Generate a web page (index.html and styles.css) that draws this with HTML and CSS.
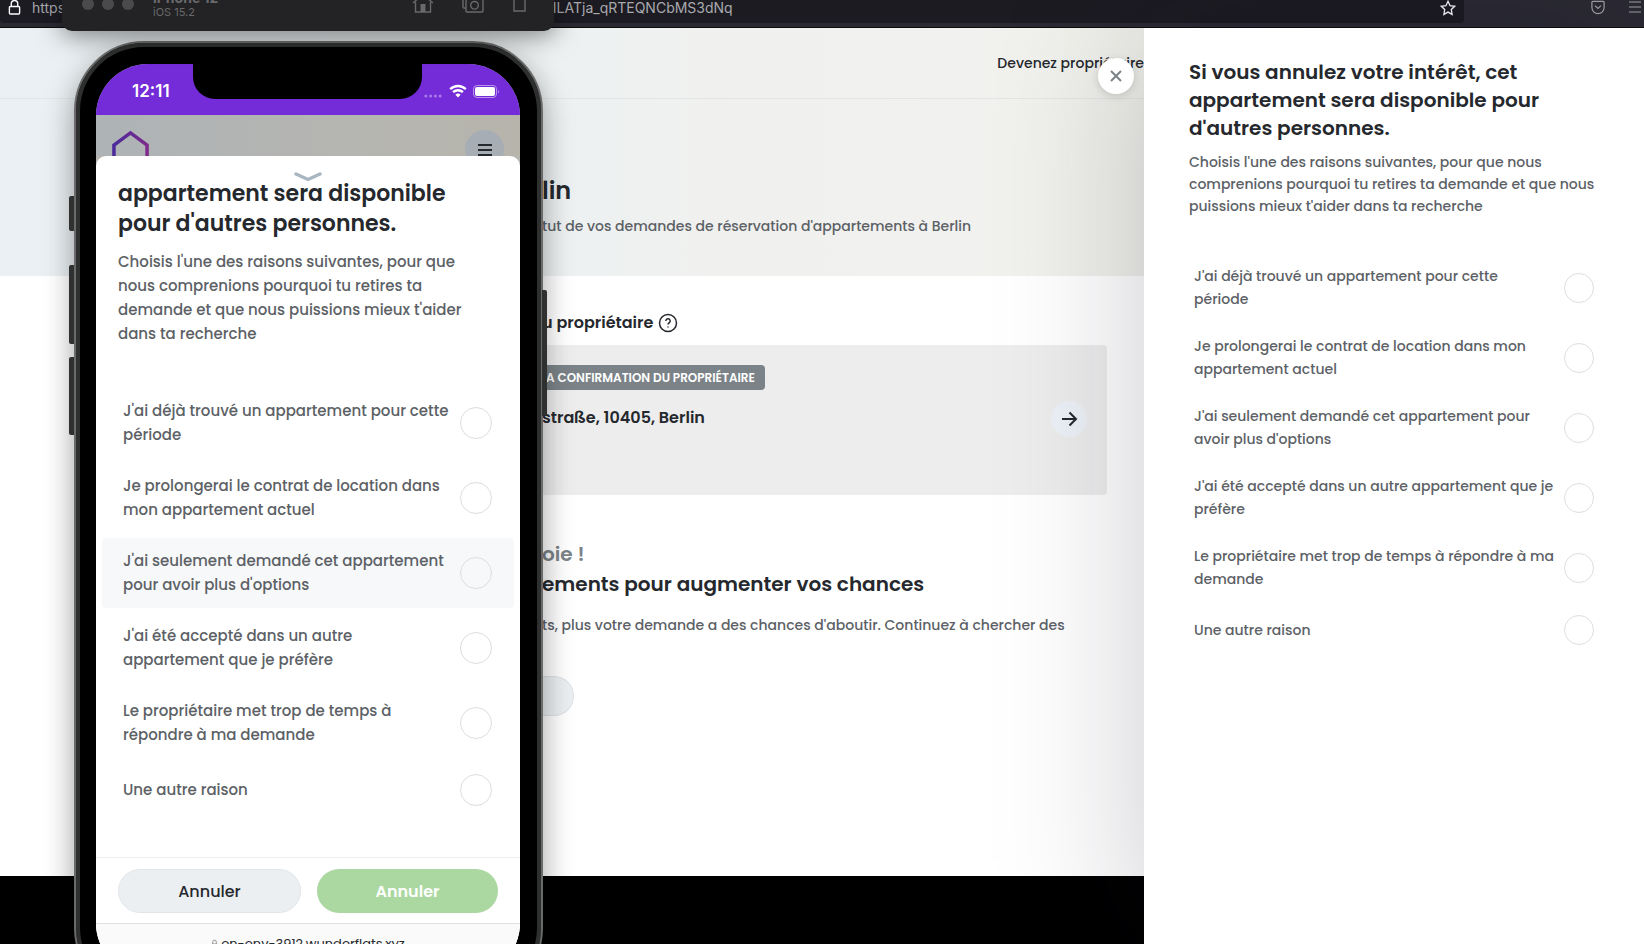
FILE: index.html
```html
<!DOCTYPE html>
<html lang="fr">
<head>
  <meta charset="UTF-8" />
  <title>Wunderflats</title>
  <link rel="stylesheet" href="styles.css">
</head>
<body>
  <div class="browser-bar">
    <div class="address">
      <svg class="lock" viewBox="0 0 14 18"><path d="M3.5 8V5a3.5 3.5 0 0 1 7 0v3M2.500 8h9a1 1 0 0 1 1 1v6a1 1 0 0 1-1 1h-9a1 1 0 0 1-1-1V9a1 1 0 0 1 1-1z"/></svg>
      <input class="url" type="text" aria-label="Adresse" value="https://en-env-3912.wunderflats.xyz/fr/my/requests/berlin/aB3kfLq81Zx74bdciILATja_qRTEQNCbMS3dNq">
      <svg class="star" viewBox="0 0 18 18"><path d="M9 1.500l2.300 4.900 5.200.7-3.800 3.700.9 5.400L9 13.600l-4.600 2.600.9-5.400L1.500 7.100l5.200-.7z"/></svg>
    </div>
    <div class="bar-icons">
      <svg class="pocket" viewBox="0 0 16 16"><path d="M2.500 1.500h11a1 1 0 0 1 1 1V8a6.500 6.500 0 0 1-13 0V2.500a1 1 0 0 1 1-1zM4.800 6L8 9l3.200-3"/></svg>
      <svg class="burger" viewBox="0 0 14 14"><path d="M1 2h12M1 7h12M1 12h12"/></svg>
    </div>
  </div>

  <div class="page">
    <main class="content">
      <div class="banner">
        <header class="top-nav"><a href="#">Devenez propriétaire</a></header>
        <div class="hero">
          <h1>lin</h1>
          <p>tut de vos demandes de réservation d'appartements à Berlin</p>
        </div>
      </div>

      <section class="requests">
        <h2 class="group-title">u propriétaire
          <svg viewBox="0 0 20 20"><circle cx="10" cy="10" r="8.500"/><path d="M7.800 8a2.200 2.200 0 1 1 3.200 2c-.7.400-1 .8-1 1.500M10 13.600v.9"/></svg>
        </h2>
        <div class="card">
          <div>
            <span class="badge">A CONFIRMATION DU PROPRIÉTAIRE</span>
            <p class="street">straße, 10405, Berlin</p>
          </div>
          <button class="arrow" aria-label="Voir la demande">
            <svg viewBox="0 0 20 20"><path d="M3 10h14M10.500 3.500L17 10l-6.500 6.500"/></svg>
          </button>
        </div>

        <p class="hint">oie !</p>
        <h2 class="boost">ements pour augmenter vos chances</h2>
        <p class="more">ts, plus votre demande a des chances d'aboutir. Continuez à chercher des</p>
        <button class="pill" aria-label="Chercher"></button>
      </section>

      <footer class="site-footer"></footer>
    </main>

    <aside class="panel">
      <button class="close" aria-label="Fermer">
        <svg viewBox="0 0 14 14"><path d="M2 2l10 10M12 2L2 12"/></svg>
      </button>
      <h2>Si vous annulez votre intérêt, cet<br>appartement sera disponible pour<br>d'autres personnes.</h2>
      <p>Choisis l'une des raisons suivantes, pour que nous<br>comprenions pourquoi tu retires ta demande et que nous<br>puissions mieux t'aider dans ta recherche</p>
      <form class="options">
        <label class="option"><span>J'ai déjà trouvé un appartement pour cette<br>période</span><input type="radio" name="raison"></label>
        <label class="option"><span>Je prolongerai le contrat de location dans mon<br>appartement actuel</span><input type="radio" name="raison"></label>
        <label class="option"><span>J'ai seulement demandé cet appartement pour<br>avoir plus d'options</span><input type="radio" name="raison"></label>
        <label class="option"><span>J'ai été accepté dans un autre appartement que je<br>préfère</span><input type="radio" name="raison"></label>
        <label class="option"><span>Le propriétaire met trop de temps à répondre à ma<br>demande</span><input type="radio" name="raison"></label>
        <label class="option"><span>Une autre raison</span><input type="radio" name="raison"></label>
      </form>
    </aside>
  </div>

  <!-- iOS simulator -->
  <div class="phone">
    <i class="key key-mute"></i>
    <i class="key key-up"></i>
    <i class="key key-down"></i>
    <i class="key key-power"></i>
    <div class="screen">
      <div class="status">
        <span class="time">12:11</span>
        <div class="notch"></div>
        <div class="signals">
          <svg class="dots" viewBox="0 0 20 4"><circle cx="2" cy="2" r="1.600"/><circle cx="7" cy="2" r="1.600"/><circle cx="12" cy="2" r="1.600"/><circle cx="17" cy="2" r="1.600"/></svg>
          <svg class="wifi" viewBox="0 0 18 14"><path d="M1.200 5.200a11.200 11.200 0 0 1 15.600 0M4.100 8.200a7 7 0 0 1 9.800 0"/><path class="wifi-dot" d="M9 13.500L6.400 10.800a3.700 3.700 0 0 1 5.200 0z"/></svg>
          <svg class="battery" viewBox="0 0 27 13"><rect class="shell" x=".5" y=".5" width="23" height="12" rx="3.500"/><rect x="2" y="2" width="20" height="9" rx="2"/><path class="tip" d="M25 4.500q1.800 2 0 4z"/></svg>
        </div>
      </div>
      <div class="app-bar">
        <svg class="logo" viewBox="0 0 38 40"><defs><linearGradient id="lg"><stop offset="0" stop-color="#4b2a9c"/><stop offset="1" stop-color="#7d2a8c"/></linearGradient></defs><path d="M2 40V15L19 2.500 36 15v25"/></svg>
        <button class="menu" aria-label="Menu"><svg viewBox="0 0 16 14"><path d="M1 2h14M1 7h14M1 12h14"/></svg></button>
      </div>
      <div class="sheet">
        <svg class="grip" viewBox="0 0 28 10"><path d="M2 2l12 5.500L26 2"/></svg>
        <div class="sheet-body">
          <h2>appartement sera disponible<br>pour d'autres personnes.</h2>
          <p>Choisis l'une des raisons suivantes, pour que<br>nous comprenions pourquoi tu retires ta<br>demande et que nous puissions mieux t'aider<br>dans ta recherche</p>
          <form class="options">
            <label class="option"><span>J'ai déjà trouvé un appartement pour cette<br>période</span><input type="radio" name="motif"></label>
            <label class="option"><span>Je prolongerai le contrat de location dans<br>mon appartement actuel</span><input type="radio" name="motif"></label>
            <label class="option active"><span>J'ai seulement demandé cet appartement<br>pour avoir plus d'options</span><input type="radio" name="motif"></label>
            <label class="option"><span>J'ai été accepté dans un autre<br>appartement que je préfère</span><input type="radio" name="motif"></label>
            <label class="option"><span>Le propriétaire met trop de temps à<br>répondre à ma demande</span><input type="radio" name="motif"></label>
            <label class="option"><span>Une autre raison</span><input type="radio" name="motif"></label>
          </form>
        </div>
        <div class="actions">
          <button class="cancel">Annuler</button>
          <button class="confirm">Annuler</button>
        </div>
        <div class="safari"><svg viewBox="0 0 8 12"><path d="M2 6V3.500a2 2 0 0 1 4 0V6M1 6h6v5H1z"/></svg>en-env-3912.wunderflats.xyz</div>
      </div>
    </div>
  </div>

  <div class="sim-bar">
    <div class="lights"><i></i><i></i><i></i></div>
    <div class="device"><b>iPhone 12</b><span>iOS 15.2</span></div>
    <div class="sim-icons">
      <svg viewBox="0 0 22 20"><path d="M1 10L11 1.500 21 10M3.500 9v10h15V9M15.500 5V2h2v5"/><path class="solid" d="M8.500 11h5v8h-5z"/></svg>
      <svg viewBox="0 0 22 20"><path d="M4 15H2a1 1 0 0 1-1-1V5a1 1 0 0 1 1-1h2M5 6h3.500l1.500-2h5l1.500 2H20a1 1 0 0 1 1 1v11a1 1 0 0 1-1 1H5a1 1 0 0 1-1-1V7a1 1 0 0 1 1-1z"/><circle cx="12.500" cy="12.300" r="3.800"/></svg>
      <svg viewBox="0 0 22 20"><path d="M2 0v18h11V0M10 2l3-3"/></svg>
    </div>
  </div>
</body>
</html>
```

FILE: styles.css
```css
* {
  box-sizing: border-box;
}

html {
  overflow: hidden;
}

body {
  display: flex;
  flex-direction: column;
  position: relative;
  height: 100vh;
  margin: 0;
  overflow: hidden;
  font-family: Poppins, Inter, "Open Sans", sans-serif;
  color: #25282d;
  background: #fff;
}

h1, h2, p {
  margin: 0;
  font-weight: 600;
  white-space: nowrap;
}

p {
  font-weight: 500;
  color: #5c6166;
}

svg {
  display: block;
  flex: none;
  fill: none;
  stroke: currentColor;
  stroke-width: 2;
}

button {
  padding: 0;
  border: none;
  font-family: inherit;
  cursor: pointer;
}

/* browser toolbar */
.browser-bar {
  display: flex;
  flex: none;
  height: 28px;
  background: #2b2a33;
  border-bottom: 1px solid #0c0c0d;
  color: #fbfbfe;
}

.address {
  display: flex;
  flex: 1;
  height: 23px;
  padding: 0 8px 7px;
  align-items: flex-end;
  background: #1c1b22;
  border-radius: 0 0 4px 4px;
}

.lock {
  width: 13px;
  height: 17px;
  stroke-width: 1.5;
}

.url {
  flex: 1;
  height: 17px;
  margin-left: 11px;
  padding: 0;
  border: none;
  outline: none;
  background: none;
  font-family: Inter, sans-serif;
  font-size: 14px;
  color: #a9a9ae;
}

.star {
  width: 16px;
  height: 16px;
  stroke-width: 1.5;
}

.bar-icons {
  display: flex;
  flex: 0 0 180px;
  justify-content: flex-end;
  gap: 22px;
  padding-right: 2px;
  color: #a5a4ac;
}

.pocket {
  width: 16px;
  height: 15px;
  stroke-width: 1.3;
}

.burger {
  width: 14px;
  height: 14px;
  stroke-width: 1.2;
}

/* page */
.page {
  display: flex;
  flex: 1;
  min-height: 0;
}

.content {
  display: flex;
  flex: 1;
  flex-direction: column;
  min-width: 0;
  overflow: hidden;
}

.banner {
  background: linear-gradient(90deg, #eaf0f3 0%, #edf1f2 48%, #f0f1ef 62%, #f1f1ef 85%, #f0f0ea 100%);
}

.top-nav {
  display: flex;
  height: 71px;
  align-items: center;
  justify-content: flex-end;
  border-bottom: 1px solid #e3e6e7;
}

.top-nav a {
  color: #25282d;
  font-size: 14px;
  font-weight: 500;
  text-decoration: none;
  white-space: nowrap;
}

.hero {
  height: 177px;
  padding: 74px 0 0 542px;
}

.hero h1 {
  font-size: 24px;
  line-height: 36px;
}

.hero p {
  margin-top: 7px;
  font-size: 14px;
  line-height: 21px;
}

.requests {
  flex: 1;
  padding: 35px 37px 0 542px;
}

.group-title {
  display: flex;
  align-items: center;
  gap: 5px;
  font-size: 16px;
  line-height: 24px;
}

.group-title svg {
  width: 20px;
  height: 20px;
  stroke-width: 1.5;
}

.card {
  display: flex;
  height: 150px;
  margin-top: 10px;
  padding: 20px 20px 0 0;
  justify-content: space-between;
  background: #ededed;
  border-radius: 0 4px 4px 0;
}

.badge {
  display: block;
  padding: 0 10px 0 4px;
  border-radius: 0 4px 4px 0;
  background: #7b8388;
  color: #fff;
  font-size: 12px;
  font-weight: 600;
  line-height: 25px;
}

.street {
  margin-top: 16px;
  font-size: 16px;
  font-weight: 600;
  line-height: 24px;
  color: #25282d;
}

.arrow {
  display: flex;
  width: 36px;
  height: 36px;
  margin-top: 36px;
  align-items: center;
  justify-content: center;
  border-radius: 50%;
  background: #edf1f7;
  color: #25282d;
}

.arrow svg {
  width: 20px;
  height: 20px;
}

.hint {
  margin-top: 44px;
  font-size: 20px;
  font-weight: 600;
  line-height: 30px;
  color: #7b8388;
}

.boost {
  font-size: 20px;
  line-height: 30px;
}

.more {
  margin-top: 16px;
  font-size: 14px;
  line-height: 21px;
}

.pill {
  width: 32px;
  height: 40px;
  margin-top: 40px;
  border: 1px solid #dde2e6;
  border-left: none;
  border-radius: 0 20px 20px 0;
  background: #eceff2;
}

.site-footer {
  flex: none;
  height: 68px;
  background: #000;
}

/* side panel */
.panel {
  position: relative;
  flex: 0 0 500px;
  padding: 30px 30px 0 45px;
  background: #fff;
  box-shadow: 0 0 140px rgba(20, 20, 40, 0.22);
}

.panel h2 {
  font-size: 20px;
  line-height: 28px;
}

.panel p {
  margin-top: 9px;
  font-size: 14px;
  line-height: 22px;
}

.panel .options {
  margin: 38px 0 0 -15px;
  gap: 4px;
  font-size: 14px;
  line-height: 23px;
}

.panel .option {
  padding: 10px 20px;
}

.panel .option input {
  width: 30px;
  height: 30px;
}

.close {
  display: flex;
  position: absolute;
  top: 30px;
  left: -46px;
  width: 36px;
  height: 36px;
  align-items: center;
  justify-content: center;
  border-radius: 50%;
  background: #fff;
  color: #7b8388;
  box-shadow: 0 2px 8px rgba(0, 0, 0, 0.15);
}

.close svg {
  width: 14px;
  height: 14px;
}

.options {
  display: flex;
  flex-direction: column;
}

.option {
  display: flex;
  align-items: center;
  justify-content: space-between;
  border-radius: 4px;
  color: #5c6166;
  font-weight: 500;
  white-space: nowrap;
}

.option input {
  appearance: none;
  flex: none;
  margin: 0;
  border: 1px solid #dedede;
  border-radius: 50%;
}

/* phone */
.phone {
  position: absolute;
  top: 41px;
  bottom: -54px;
  left: 74px;
  width: 469px;
  padding: 21px 21px 21px 20px;
  border: 2px solid #6a6a6a;
  border-radius: 70px;
  background: #000;
  box-shadow: inset 0 0 0 4px #2e302f, 0 10px 30px rgba(0, 0, 0, 0.38);
}

.key {
  position: absolute;
  left: -7px;
  width: 5px;
  border-radius: 2px 0 0 2px;
  background: #2f3130;
}

.key-mute {
  top: 153px;
  height: 35px;
}

.key-up {
  top: 222px;
  height: 79px;
}

.key-down {
  top: 314px;
  height: 78px;
}

.key-power {
  top: 247px;
  left: auto;
  right: -6px;
  height: 126px;
  border-radius: 0 2px 2px 0;
}

.screen {
  display: flex;
  flex-direction: column;
  height: 100%;
  overflow: hidden;
  border-radius: 52px;
  background: #b6b5b0;
}

.status {
  display: flex;
  flex: none;
  height: 51px;
  justify-content: space-between;
  background: #742cd8;
  color: #fff;
}

.time {
  width: 97px;
  padding: 17px 0 0 36px;
  font-family: Inter, sans-serif;
  font-size: 17px;
  font-weight: 600;
  line-height: 20px;
}

.notch {
  width: 229px;
  height: 35px;
  border-radius: 0 0 22px 22px;
  background: #000;
}

.signals {
  display: flex;
  width: 98px;
  height: 54px;
  padding-right: 20px;
  align-items: center;
  justify-content: flex-end;
  gap: 6px;
}

.dots {
  width: 19px;
  height: 4px;
  margin-top: 9px;
  fill: #a878ea;
  stroke: none;
}

.wifi {
  width: 18px;
  height: 14px;
  stroke-width: 2.4;
}

.wifi-dot {
  fill: #fff;
  stroke: none;
}

.battery {
  width: 27px;
  height: 13px;
  fill: #fff;
  stroke: none;
}

.battery .shell {
  fill: none;
  stroke: #b894ec;
  stroke-width: 1;
}

.battery .tip {
  fill: #b894ec;
}

.app-bar {
  display: flex;
  flex: none;
  height: 41px;
  padding: 15px 16px 0;
  justify-content: space-between;
  background: linear-gradient(90deg, #aeb3b6, #b5b5b1 60%, #b6b4ab);
}

.logo {
  width: 37px;
  height: 40px;
  stroke: url(#lg);
  stroke-width: 3.6;
}

.menu {
  display: flex;
  width: 39px;
  height: 39px;
  align-items: center;
  justify-content: center;
  border-radius: 50%;
  background: #a6adb4;
  color: #25282d;
}

.menu svg {
  width: 16px;
  height: 14px;
}

.sheet {
  display: flex;
  position: relative;
  flex: 1;
  flex-direction: column;
  border-radius: 10px 10px 0 0;
  background: #fff;
}

.grip {
  position: absolute;
  top: 16px;
  left: 198px;
  width: 28px;
  height: 10px;
  color: #a9b6bf;
  stroke-width: 3.4;
  stroke-linecap: round;
}

.sheet-body {
  height: 701px;
  padding: 23px 6px 0;
}

.sheet-body h2,
.sheet-body p {
  padding-left: 16px;
}

.sheet-body h2 {
  font-size: 22px;
  line-height: 30px;
}

.sheet-body p {
  margin-top: 11px;
  font-size: 15px;
  line-height: 24px;
}

.sheet-body .options {
  margin-top: 42px;
  gap: 5px;
  font-size: 15px;
  line-height: 24px;
}

.sheet-body .option {
  padding: 11px 22px 11px 21px;
}

.sheet-body .option input {
  width: 32px;
  height: 32px;
}

.option.active {
  background: #f7f8fa;
}

.actions {
  display: flex;
  gap: 16px;
  padding: 11px 22px 10px;
  border-top: 1px solid #eceeef;
  border-bottom: 1px solid #dfe1e3;
}

.actions button {
  flex: 1;
  height: 44px;
  border-radius: 22px;
  font-size: 16px;
}

.cancel {
  border: 1px solid #e2e5e8;
  background: #eceff2;
  color: #25282d;
  font-weight: 500;
}

.confirm {
  background: #abd8a0;
  color: #fff;
  font-weight: 600;
}

.safari {
  display: flex;
  flex: 1;
  padding-top: 11px;
  align-items: flex-start;
  justify-content: center;
  gap: 3px;
  background: #fafafa;
  font-size: 13px;
  line-height: 18px;
}

.safari svg {
  width: 7px;
  height: 12px;
  margin-top: 3px;
  color: #888;
  stroke-width: 1;
}

/* simulator title bar */
.sim-bar {
  display: flex;
  position: absolute;
  top: 0;
  left: 62px;
  width: 492px;
  height: 31px;
  padding: 0 20px;
  border-radius: 0 0 10px 10px;
  background: #232325;
  color: #69696b;
  box-shadow: 0 4px 26px rgba(0, 0, 0, 0.5);
}

.lights {
  display: flex;
  gap: 8px;
}

.lights i {
  width: 12px;
  height: 12px;
  margin-top: -2px;
  border-radius: 50%;
  background: #4a4a4c;
}

.device {
  display: flex;
  flex: 1;
  flex-direction: column;
  height: 19px;
  justify-content: flex-end;
  padding-left: 19px;
  font-family: Inter, sans-serif;
  font-size: 11px;
  line-height: 14px;
}

.device b {
  font-size: 14px;
}

.sim-icons {
  display: flex;
  height: 13px;
  align-items: flex-end;
  gap: 28px;
}

.sim-icons svg {
  width: 22px;
  height: 20px;
  stroke-width: 1.4;
}

.sim-icons .solid {
  fill: currentColor;
  stroke: none;
}
```
